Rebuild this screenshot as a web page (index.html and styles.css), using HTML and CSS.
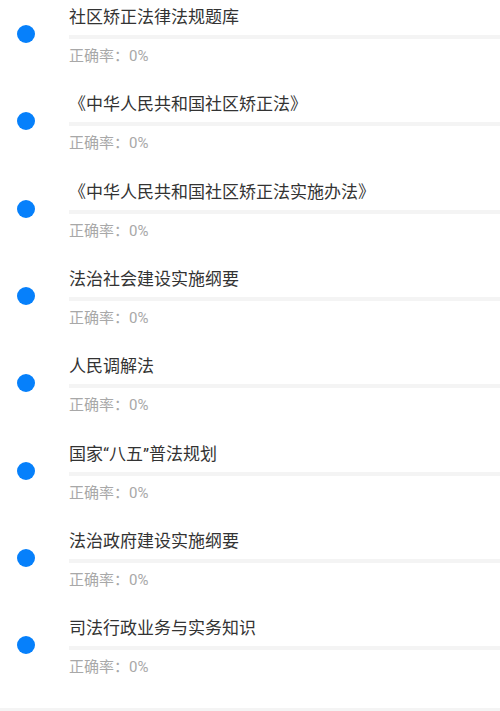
FILE: index.html
```html
<!DOCTYPE html>
<html lang="zh-CN">
<head>
<meta charset="utf-8">
<link rel="stylesheet" href="styles.css">
</head>
<body>
<div class="page">
  <ul class="list">
    <li class="item"><span class="dot"></span><div class="body"><div class="title">社区矫正法律法规题库</div><div class="track"></div><div class="rate">正确率：0%</div></div></li>
    <li class="item"><span class="dot"></span><div class="body"><div class="title">《中华人民共和国社区矫正法》</div><div class="track"></div><div class="rate">正确率：0%</div></div></li>
    <li class="item"><span class="dot"></span><div class="body"><div class="title">《中华人民共和国社区矫正法实施办法》</div><div class="track"></div><div class="rate">正确率：0%</div></div></li>
    <li class="item"><span class="dot"></span><div class="body"><div class="title">法治社会建设实施纲要</div><div class="track"></div><div class="rate">正确率：0%</div></div></li>
    <li class="item"><span class="dot"></span><div class="body"><div class="title">人民调解法</div><div class="track"></div><div class="rate">正确率：0%</div></div></li>
    <li class="item"><span class="dot"></span><div class="body"><div class="title">国家“八五”普法规划</div><div class="track"></div><div class="rate">正确率：0%</div></div></li>
    <li class="item"><span class="dot"></span><div class="body"><div class="title">法治政府建设实施纲要</div><div class="track"></div><div class="rate">正确率：0%</div></div></li>
    <li class="item"><span class="dot"></span><div class="body"><div class="title">司法行政业务与实务知识</div><div class="track"></div><div class="rate">正确率：0%</div></div></li>
  </ul>
  <div class="footer-strip"></div>
</div>
</body>
</html>
```
FILE: styles.css
```css
* { box-sizing: border-box; }
html, body {
  margin: 0;
  padding: 0;
  background: #ffffff;
  font-family: Roboto, "Noto Sans CJK SC", sans-serif;
}
.page {
  width: 500px;
  height: 711px;
  overflow: hidden;
  display: flex;
  flex-direction: column;
}
.list {
  list-style: none;
  margin: 0;
  padding: 0 0 9px 0;
}
.item {
  height: 87.33px;
  display: flex;
  align-items: flex-start;
  padding-top: 5px;
}
.dot {
  flex: 0 0 18px;
  width: 18px;
  height: 18px;
  border-radius: 50%;
  background: #0680fb;
  margin: 20px 34px 0 17px;
}
.body {
  flex: 1;
  min-width: 0;
}
.title {
  font-size: 17px;
  line-height: 24px;
  color: #333333;
  white-space: nowrap;
}
.track {
  height: 4px;
  background: #f4f4f4;
  margin-top: 6px;
}
.rate {
  font-size: 15px;
  line-height: 20px;
  color: #a8a8a8;
  margin-top: 7px;
}
.footer-strip {
  flex: 1;
  background: #f4f4f4;
}
```
